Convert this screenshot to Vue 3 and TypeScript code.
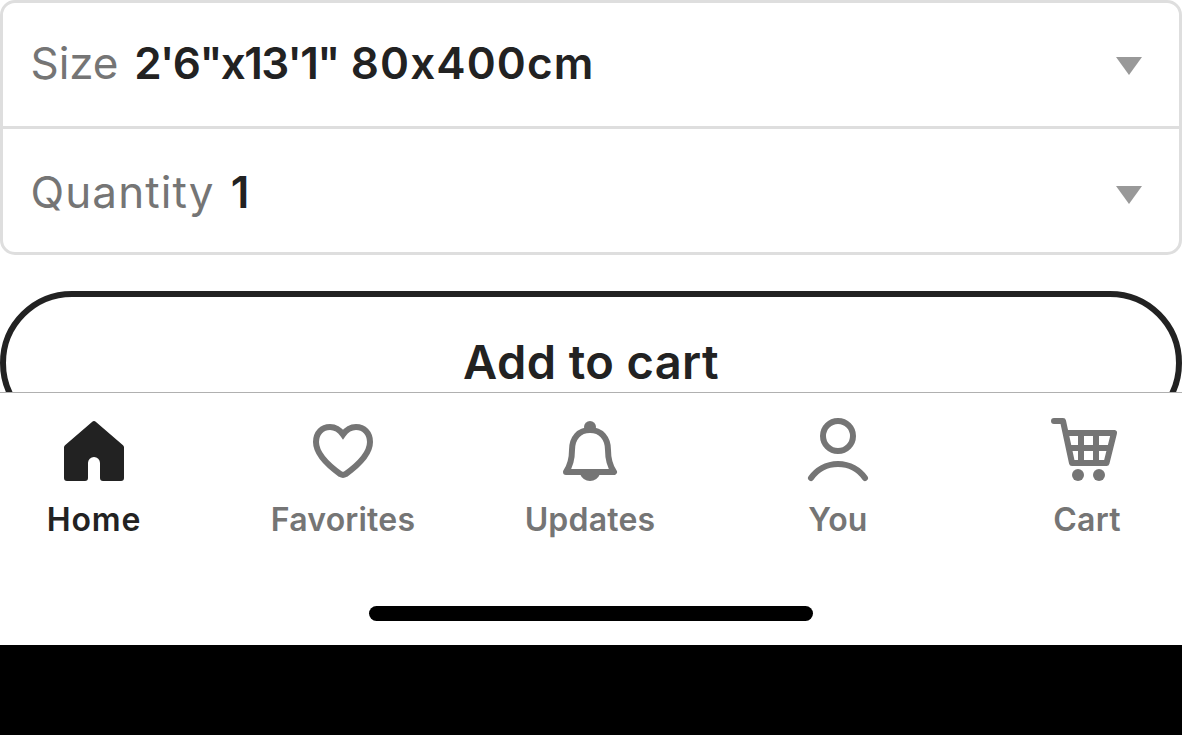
<script setup lang="ts">
interface Option { label: string; value: string[]; kind: string }
interface Tab { label: string; icon: string }

const options: Option[] = [
  { label: 'Size', value: ['2\'6"x13\'1"', '80x400cm'], kind: 'size' },
  { label: 'Quantity', value: ['1'], kind: 'quantity' },
]

const tabs: Tab[] = [
  { label: 'Home', icon: 'home' },
  { label: 'Favorites', icon: 'heart' },
  { label: 'Updates', icon: 'bell' },
  { label: 'You', icon: 'person' },
  { label: 'Cart', icon: 'cart' },
]
</script>

<template>
  <div class="screen">
    <main class="content">
      <div class="options">
        <div v-for="o in options" :key="o.kind" class="option" :class="o.kind">
          <span class="label">{{ o.label }}</span>
          <span class="value"><span v-for="part in o.value" :key="part">{{ part }}</span></span>
          <svg class="caret" width="28" height="20" viewBox="0 0 28 20"><path d="M1 1H27L14 19Z" fill="#999" /></svg>
        </div>
      </div>
      <button class="add"><span>Add to cart</span></button>
    </main>
    <nav class="tabs">
      <a v-for="t in tabs" :key="t.icon" class="tab" :class="t.icon">
        <svg class="icon" width="72" height="72" viewBox="0 0 72 72" fill="none" stroke="currentColor" stroke-width="6" stroke-linejoin="round" stroke-linecap="round">
          <path v-if="t.icon === 'home'" fill="currentColor" stroke="none" d="M34 6.9Q36 5.1 38 6.9L65 30.2Q66 31 66 32.5V63Q66 66 63 66H45Q42 66 42 63V48A6 6 0 0 0 30 48V63Q30 66 27 66H9Q6 66 6 63V32.5Q6 31 7 30.2Z" />
          <path v-else-if="t.icon === 'heart'" stroke-linejoin="miter" d="M36 19.5C32.5 14.5 28 12 23 12C15 12 9 18 9 27C9 38.5 20 49.5 33.5 59.2Q36 60.6 38.5 59.2C52 49.5 63 38.5 63 27C63 18 57 12 49 12C44 12 39.500 14.500 36 19.500Z" />
          <template v-else-if="t.icon === 'bell'">
            <path d="M12 57C16 51 18 44 18 35C18 23 25 15 36 15S54 23 54 35C54 44 56 51 60 57Z" />
            <circle cx="36" cy="12" r="6" fill="currentColor" stroke="none" />
            <path d="M26 59H46Q43 66 36 66T26 59Z" fill="currentColor" stroke="none" />
          </template>
          <template v-else-if="t.icon === 'person'">
            <circle cx="36" cy="21" r="15" />
            <path d="M9 63A33 33 0 0 1 63 63" />
          </template>
          <template v-else>
            <path d="M3 6H12L21 48H55.500L63 18H15" />
            <path d="M17.500 33H59M30 19V47M45 19V47" stroke-linecap="butt" />
            <circle cx="27" cy="60" r="6" fill="currentColor" stroke="none" />
            <circle cx="48" cy="60" r="6" fill="currentColor" stroke="none" />
          </template>
        </svg>
        <span class="name">{{ t.label }}</span>
      </a>
    </nav>
    <div class="indicator"><i></i></div>
    <div class="footer"></div>
  </div>
</template>

<style>
body { margin: 0; background: #fff; }
</style>

<style scoped>
.screen {
  width: 1182px;
  height: 735px;
  display: flex;
  flex-direction: column;
  overflow: hidden;
  background: #fff;
  font-family: Inter, "Liberation Sans", sans-serif;
  font-feature-settings: "calt" 0;
  color: #222;
}
.content { height: 392px; overflow: hidden; flex: none; }
.options {
  box-sizing: border-box;
  height: 255px;
  border: 3px solid #dedede;
  border-radius: 15px;
}
.option {
  box-sizing: border-box;
  height: 123px;
  display: flex;
  align-items: center;
  padding: 0 36px 3px 27.5px;
  font-size: 44px;
  line-height: 54px;
  white-space: nowrap;
}
.option + .option { height: 126px; padding-top: 3px; padding-bottom: 0; border-top: 3px solid #dedede; }
.label { color: #757575; font-weight: 400; letter-spacing: -.1px; margin-right: 16px; }
.quantity .label { letter-spacing: 1.1px; }
.value { display: flex; gap: 12px; font-weight: 600; }
.size .value span:first-child { letter-spacing: -1.6px; }
.size .value span:last-child { letter-spacing: 1.1px; }
.caret { margin-left: auto; position: relative; top: 3px; }
.add {
  box-sizing: border-box;
  display: flex;
  justify-content: center;
  align-items: center;
  width: 100%;
  height: 144px;
  margin: 36px 0 0;
  padding: 0 0 2px;
  border: 6px solid #222;
  border-radius: 72px;
  background: #fff;
  color: #222;
  font: 600 47px/58px Inter, "Liberation Sans", sans-serif;
  letter-spacing: .4px;
}
.tabs {
  box-sizing: border-box;
  flex: none;
  height: 178px;
  border-top: 1px solid #b0b0b0;
  padding: 22px 0 0 19px;
  display: grid;
  grid-template-columns: 150px 348px 146px 350px 148px;
}
.tab {
  display: flex;
  flex-direction: column;
  align-items: center;
  color: #757575;
}
.tab.home { color: #222; }
.name {
  margin-top: 13px;
  font-size: 32px;
  line-height: 40px;
  font-weight: 600;
  letter-spacing: .2px;
}
.home .name { letter-spacing: .8px; }
.indicator { flex: none; height: 75px; display: flex; justify-content: center; }
.indicator i { width: 444px; height: 15px; margin-top: 36px; border-radius: 8px; background: #000; }
.footer { flex: 1; background: #000; }
</style>
